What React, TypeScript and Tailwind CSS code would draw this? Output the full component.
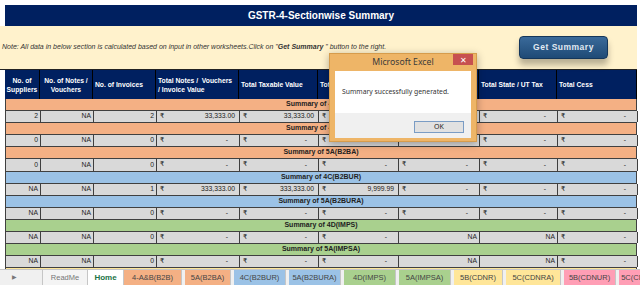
import React from "react";

type Cell = string | { r: string };

const r = (v: string) => ({ r: v });
const dash6 = [r("-"), r("-"), r("-"), r("-"), r("-"), r("-")];

const GRID = "grid grid-cols-[35px_53px_63px_83px_79px_80px_81px_78px_80px]";

const sections: { title: string; bg: string; cells: Cell[]; tall?: boolean }[] = [
  { title: "Summary of 4A(B2B)", bg: "bg-[#F4B084]", cells: ["2", "NA", "2", r("33,333.00"), r("33,333.00"), r("-"), r("-"), r("-"), r("-")] },
  { title: "Summary of 4B(B2B)", bg: "bg-[#F4B084]", cells: ["0", "NA", "0", ...dash6] },
  { title: "Summary of 5A(B2BA)", bg: "bg-[#F4B084]", cells: ["0", "NA", "0", ...dash6], tall: true },
  { title: "Summary of 4C(B2BUR)", bg: "bg-[#9BC2E6]", cells: ["NA", "NA", "1", r("333,333.00"), r("333,333.00"), r("9,999.99"), r("-"), r("-"), r("-")] },
  { title: "Summary of 5A(B2BURA)", bg: "bg-[#9BC2E6]", cells: ["NA", "NA", "0", ...dash6] },
  { title: "Summary of 4D(IMPS)", bg: "bg-[#A9D08E]", cells: ["NA", "NA", "0", r("-"), r("-"), r("-"), "NA", "NA", r("-")] },
  { title: "Summary of 5A(IMPSA)", bg: "bg-[#A9D08E]", cells: ["NA", "NA", "0", r("-"), r("-"), r("-"), "NA", "NA", r("-")] },
  { title: "Summary of 5B(CDNR)", bg: "bg-[#FFE699]", cells: ["0", "NA", "0", ...dash6] },
];

const headers: { text: React.ReactNode; center?: boolean }[] = [
  { text: <>No. of<br />Suppliers</>, center: true },
  { text: <>No. of Notes /<br />Vouchers</>, center: true },
  { text: "No. of Invoices" },
  { text: <>Total Notes /&nbsp; Vouchers<br />/ Invoice Value</> },
  { text: "Total Taxable Value" },
  { text: "Total Integrated Tax" },
  { text: "Total Central Tax" },
  { text: "Total State / UT Tax" },
  { text: "Total Cess" },
];

const tabs = [
  { name: "4-A&B(B2B)", w: "w-[58px]", bg: "bg-[#F4B084]" },
  { name: "5A(B2BA)", w: "w-[46px]", bg: "bg-[#F4B084]" },
  { name: "4C(B2BUR)", w: "w-[52px]", bg: "bg-[#9BC2E6]" },
  { name: "5A(B2BURA)", w: "w-[52px]", bg: "bg-[#9BC2E6]" },
  { name: "4D(IMPS)", w: "w-[52px]", bg: "bg-[#A9D08E]" },
  { name: "5A(IMPSA)", w: "w-[52px]", bg: "bg-[#A9D08E]" },
  { name: "5B(CDNR)", w: "w-[49px]", bg: "bg-[#FFE699]" },
  { name: "5C(CDNRA)", w: "w-[55px]", bg: "bg-[#FFE699]" },
  { name: "5B(CDNUR)", w: "w-[52px]", bg: "bg-[#FF9EB5]" },
  { name: "5C(CDNURA)", w: "w-[52px]", bg: "bg-[#FF9EB5]" },
];

function DataCell({ c }: { c: Cell }) {
  if (typeof c === "string") {
    return (
      <div className="flex items-center justify-end pr-[2px] border-r border-[#3F3F3F]">
        {c}
      </div>
    );
  }
  return (
    <div className="flex items-center justify-between pl-[3px] border-r border-[#3F3F3F]">
      <span className="font-['DejaVu_Sans',sans-serif] text-[6.5px]">₹</span>
      <span className={c.r === "-" ? "pr-[11px]" : "pr-[4px]"}>{c.r}</span>
    </div>
  );
}

export default function App() {
  return (
    <div className="relative w-[640px] h-[285px] bg-white overflow-hidden flex flex-col font-['Liberation_Sans',Arial,sans-serif]">
      <div className="flex-1 min-h-0 overflow-hidden pt-[5px]">
        {/* title */}
        <div className="ml-[5px] w-[632px] h-[21px] bg-[#002060] flex items-center justify-center text-white font-bold text-[10px]">
          GSTR-4-Sectionwise Summary
        </div>

        {/* note */}
        <div className="w-[637px] h-[44px] bg-[#FFF2CC] border-b border-[#222] flex items-center">
          <p className="pl-[2px] italic text-[7px] text-[#333]">
            Note: All data in below section is calculated based on input in other worksheets.Click on "
            <b>Get Summary</b> " button to the right.
          </p>
          <div className="ml-auto mr-[29px] w-[89px] h-[23px] rounded-[4px] bg-linear-to-b from-[#3A6A9A] to-[#1F4A76] border border-[#14365A] shadow-[0_6px_6px_rgba(0,0,0,0.28)] flex items-center justify-center text-[8.5px] font-bold tracking-[0.5px] text-[#E2EAF2]">
            Get Summary
          </div>
        </div>

        {/* table */}
        <div className="ml-[5px] w-[632px]">
          <div className={`${GRID} h-[29px] bg-[#002060] text-white font-bold text-[6.75px] leading-[9px]`}>
            {headers.map((h, i) => (
              <div
                key={i}
                className={`flex items-center border-r border-black ${h.center ? "justify-center text-center" : "pl-[2px]"}`}
              >
                <span>{h.text}</span>
              </div>
            ))}
          </div>

          {sections.map((s) => (
            <React.Fragment key={s.title}>
              <div className={`h-[12px] ${s.bg} border-x border-b border-[#404040] flex items-center justify-center font-bold text-[7px] text-[#222]`}>
                {s.title}
              </div>
              <div className={`${GRID} ${s.tall ? "h-[13px]" : "h-[12px]"} bg-[#D9D9D9] border-l border-b border-[#404040] text-[6.8px] text-[#222]`}>
                {s.cells.map((c, i) => (
                  <DataCell key={i} c={c} />
                ))}
              </div>
            </React.Fragment>
          ))}
        </div>
      </div>

      {/* sheet tabs */}
      <div className="h-[16px] bg-[#F0F0F0] border-t border-[#C6C6C6] flex text-[7.5px] text-[#444] shrink-0 overflow-hidden">
        <div className="w-[43px] shrink-0 flex items-center pl-[12px] text-[#777] text-[6px] border-r border-[#C6C6C6]">▶</div>
        <div className="w-[45px] shrink-0 flex items-center justify-center bg-[#F4F4F4] text-[#777] border-r border-[#C6C6C6]">ReadMe</div>
        <div className="w-[36px] shrink-0 flex items-center justify-center bg-white text-[#217346] font-bold text-[8px] border-r border-[#C6C6C6]">Home</div>
        <div className="flex gap-[3px] shrink-0">
          {tabs.map((t) => (
            <div key={t.name} className={`${t.w} ${t.bg} shrink-0 flex items-center justify-center whitespace-nowrap border-r border-[#C6C6C6]`}>
              {t.name}
            </div>
          ))}
        </div>
      </div>

      {/* message box */}
      <div className="absolute left-[329px] top-[53px] w-[148px] h-[89px] bg-[#EEB567] border border-[#D69C4C] shadow-[0_2px_8px_rgba(0,0,0,0.3)] flex flex-col px-[5px] pb-[3px] font-['Noto_Sans',sans-serif]">
        <div className="h-[17px] flex items-center justify-center text-[8.7px] text-[#3A3A3A]">Microsoft Excel</div>
        <div className="absolute right-[3px] top-0 w-[20px] h-[11px] bg-[#C75050] text-white flex items-center justify-center text-[8px] leading-none">
          ✕
        </div>
        <div className="flex-1 bg-white flex flex-col">
          <div className="h-[42px] flex items-center pl-[7px] text-[6.8px] text-[#333]">Summary successfully generated.</div>
          <div className="flex-1 bg-[#F0F0F0] flex justify-end pt-[8px] pr-[7px]">
            <div className="w-[50px] h-[12px] bg-[#E1E1E1] border border-[#7A9CC4] flex items-center justify-center text-[7px] text-[#222]">
              OK
            </div>
          </div>
        </div>
      </div>
    </div>
  );
}
